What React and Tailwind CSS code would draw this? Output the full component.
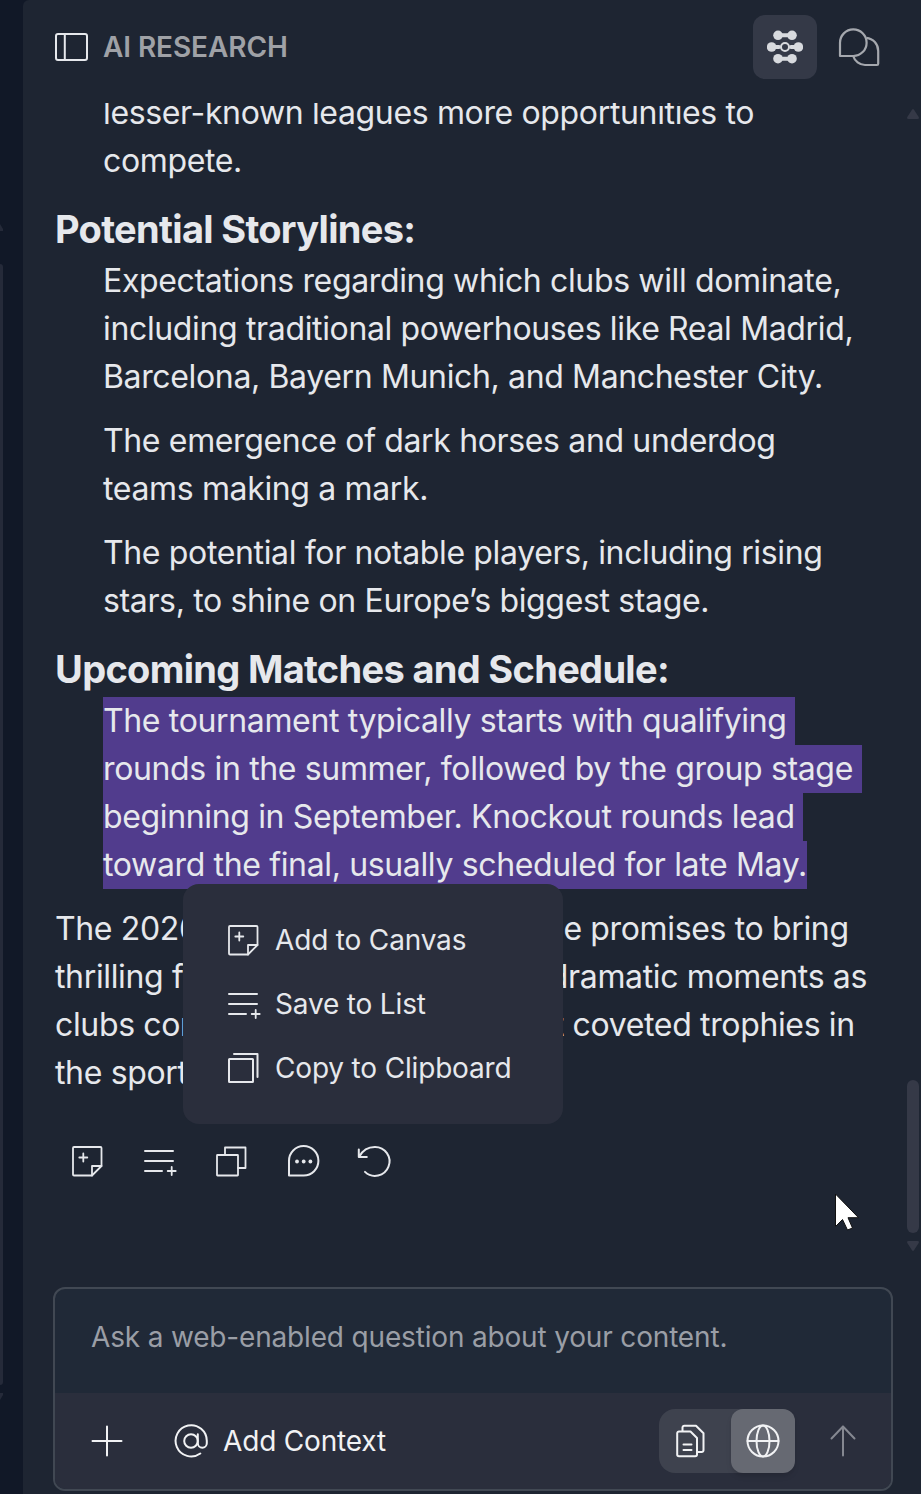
const intro = ['lesser-known leagues more opportunities to', 'compete.'];

const storylines = [
    [
        'Expectations regarding which clubs will dominate,',
        'including traditional powerhouses like Real Madrid,',
        'Barcelona, Bayern Munich, and Manchester City.'
    ],
    ['The emergence of dark horses and underdog', 'teams making a mark.'],
    ['The potential for notable players, including rising', 'stars, to shine on Europe’s biggest stage.']
];

const selected = [
    'The tournament typically starts with qualifying ',
    'rounds in the summer, followed by the group stage ',
    'beginning in September. Knockout rounds lead ',
    'toward the final, usually scheduled for late May.'
];

function Icon({ children, className = 'size-9', width = 2 }) {
    return (
        <svg
            viewBox="0 0 36 36"
            className={`shrink-0 ${className}`}
            fill="none"
            stroke="currentColor"
            strokeWidth={width}
            strokeLinecap="round"
            strokeLinejoin="round"
        >
            {children}
        </svg>
    );
}

function PanelIcon() {
    return (
        <Icon>
            <rect x="3" y="5" width="31" height="26" rx="2" />
            <path d="M11.800 5v26" />
        </Icon>
    );
}

function NodesIcon() {
    return (
        <Icon width={4}>
            <g fill="currentColor" stroke="none">
                <circle cx="11" cy="6.300" r="4.800" />
                <circle cx="25" cy="6.300" r="4.800" />
                <circle cx="4.600" cy="18" r="4.800" />
                <circle cx="31.400" cy="18" r="4.800" />
                <circle cx="11" cy="29.700" r="4.800" />
                <circle cx="25" cy="29.700" r="4.800" />
            </g>
            <path d="M11 6.300h14M4 18h8M24 18h8M11 29.700h14" />
            <circle cx="18" cy="18" r="4" strokeWidth="2" />
        </Icon>
    );
}

function ChatsIcon() {
    return (
        <svg viewBox="0 0 44 44" className="size-11" fill="none" stroke="currentColor" strokeWidth="2.2" strokeLinejoin="round">
            <path d="M3 31V17.800a13.300 13.300 0 1 1 13.300 13.200Z" />
            <path d="M29.400 12.900a13 13 0 0 1 11.800 13V38.800a1.200 1.200 0 0 1-1.200 1.200H28a12.600 12.600 0 0 1-11.800-9" />
        </svg>
    );
}

function NoteIcon() {
    return (
        <Icon width={1.8}>
            <path d="M23 32.500H5a1 1 0 0 1-1-1V5a1 1 0 0 1 1-1h26.500a1 1 0 0 1 1 1v18Z" />
            <path d="M23 32.500V23h9.500" />
            <path d="M14.300 10.500v8M10.300 14.500h8" />
        </Icon>
    );
}

function ListIcon() {
    return (
        <Icon>
            <path d="M4 8h28M4 18h28M4 28h17" />
            <path d="M26.700 28h8M30.700 24v8" strokeWidth="1.800" />
        </Icon>
    );
}

function CopyIcon() {
    return (
        <Icon>
            <rect x="4" y="9" width="24" height="23" rx="0.500" />
            <path d="M9 4h23.500v23" />
        </Icon>
    );
}

function DuplicateIcon() {
    return (
        <Icon width={1.800}>
            <rect x="4" y="12" width="21" height="20.500" rx="0.500" />
            <path d="M12 12V4.500h20.500V25H25" />
        </Icon>
    );
}

function CommentIcon() {
    return (
        <Icon>
            <path d="M4 32.500V18a14.700 14.700 0 1 1 14.700 14.500Z" />
            <g fill="currentColor" stroke="none">
                <circle cx="12" cy="18.500" r="1.900" />
                <circle cx="18.700" cy="18.500" r="1.900" />
                <circle cx="25.400" cy="18.500" r="1.900" />
            </g>
        </Icon>
    );
}

function UndoIcon() {
    return (
        <Icon>
            <path d="M1.800 6.500V14h8M2.300 13.500C5.500 7.500 11 3.900 17.800 3.900A14.500 14.500 0 1 1 8 28.900" />
        </Icon>
    );
}

function PlusIcon() {
    return (
        <Icon>
            <path d="M18 3.500v29M3.500 18h29" />
        </Icon>
    );
}

function AtIcon() {
    return (
        <Icon>
            <circle cx="18" cy="18" r="6.800" />
            <path d="M24.800 11.200v9a4.500 4.500 0 0 0 9 0V18a15.600 15.600 0 1 0-6.500 12.500" />
        </Icon>
    );
}

function FilesIcon() {
    return (
        <Icon>
            <path d="M6 8.500h11.500l6.500 6.500v16.500a1.800 1.800 0 0 1-1.800 1.800H6a1.800 1.800 0 0 1-1.800-1.800V10.300A1.800 1.800 0 0 1 6 8.500Z" />
            <path d="M9.500 8V4.500a1.800 1.800 0 0 1 1.800-1.800H23l7.500 7.500v17a1.800 1.800 0 0 1-1.800 1.800H25M10.500 21.500h8M10.500 27h8" />
        </Icon>
    );
}

function GlobeIcon() {
    return (
        <Icon>
            <circle cx="18" cy="18" r="15.500" />
            <ellipse cx="18" cy="18" rx="6.500" ry="15.500" />
            <path d="M2.500 18h31" />
        </Icon>
    );
}

function ArrowUpIcon() {
    return (
        <Icon>
            <path d="M18 32.500V3.500M6.500 15.500 18 3.500l11.500 12" />
        </Icon>
    );
}

function Lines({ lines, className = '' }) {
    return (
        <p className={`text-[32px] leading-[48px] tracking-[-0.011em] ${className}`}>
            {lines.map((line) => (
                <span key={line} className="block whitespace-nowrap">{line}</span>
            ))}
        </p>
    );
}

function Heading({ children }) {
    return <h3 className="mt-4 text-[38px] leading-[56px] font-bold tracking-[-0.018em] whitespace-nowrap">{children}</h3>;
}

function Closing() {
    return (
        <div className="mt-4 text-[32px] leading-[48px] tracking-[-0.011em] whitespace-nowrap">
            <p>The 2026 UEFA Champions League promises to bring</p>
            <p className="flex w-[812px] justify-between"><span>thrilling football, surprises,</span><span>and dramatic moments as</span></p>
            <p>clubs compete for one of the most coveted trophies in</p>
            <p>the sport.</p>
        </div>
    );
}

function SelectionMenu() {
    return (
        <div className="absolute left-[160px] top-[781px] w-[380px] h-[240px] rounded-2xl bg-[#2a2e3c] pl-[42px] py-6 text-[28px] tracking-[-0.006em] text-[#e6e8ec]">
            <div className="flex h-16 items-center gap-[14px]"><NoteIcon />Add to Canvas</div>
            <div className="flex h-16 items-center gap-[14px]"><ListIcon />Save to List</div>
            <div className="flex h-16 items-center gap-[14px]"><CopyIcon />Copy to Clipboard</div>
        </div>
    );
}

function Scrollbar() {
    return (
        <div className="absolute right-[2px] top-[6px] flex h-[1142px] w-3 flex-col items-center text-[#353947]">
            <svg viewBox="0 0 12 10" className="h-[10px] w-3" fill="currentColor"><path d="M5 .7Q6-.5 7 .7L11.700 8Q12.500 10 10.500 10H1.500Q-.5 10 .3 8Z" /></svg>
            <div className="mt-[961px] h-[153px] w-3 rounded-full bg-[#353947]" />
            <svg viewBox="0 0 12 10" className="mt-2 h-[10px] w-3" fill="currentColor"><path d="M5 9.300Q6 10.500 7 9.300L11.700 2Q12.500 0 10.500 0H1.500Q-.5 0 .3 2Z" /></svg>
        </div>
    );
}

function Composer() {
    return (
        <div className="ml-[30px] h-[204px] w-[840px] overflow-hidden rounded-xl border-2 border-[#414853] bg-[#202937] text-[28px] tracking-[-0.006em]">
            <div className="flex h-[104px] items-start pl-9 pt-[27px] leading-[42px] text-[#9a9ea6]">
                Ask a web-enabled question about your content.
            </div>
            <div className="flex h-24 items-center bg-[#2a2e3c] pl-[34px] text-[#f1f2f4]">
                <PlusIcon />
                <div className="ml-12 flex items-center gap-[14px]"><AtIcon />Add Context</div>
                <div className="ml-auto flex h-16 w-[136px] justify-between rounded-2xl bg-[#3e424e]">
                    <div className="flex w-16 items-center justify-center"><FilesIcon /></div>
                    <div className="flex w-16 items-center justify-center rounded-xl bg-[#666972] shadow-md"><GlobeIcon /></div>
                </div>
                <div className="mr-[30px] ml-[30px] text-[#858891]"><ArrowUpIcon /></div>
            </div>
        </div>
    );
}

export default function App() {
    return (
        <div className="flex h-[1494px] w-[921px] overflow-hidden bg-[#111827] font-['Inter',sans-serif] text-[#e6e8ec]">
            <div className="flex w-[23px] shrink-0 flex-col items-start text-[#252a39]">
                <svg viewBox="0 0 3 10" className="mt-[222px] h-[10px] w-[3px]" fill="currentColor"><path d="M0 2l3 5v2H0Z" /></svg>
                <div className="mt-8 h-[1121px] w-[3px] rounded-r bg-[#252a39]" />
                <svg viewBox="0 0 3 8" className="mt-2 h-2 w-[3px]" fill="currentColor"><path d="M0 0h3v2L0 7Z" /></svg>
            </div>
            <main className="flex min-w-0 flex-1 flex-col rounded-tl-md bg-[#1e2532]">
                <header className="flex h-[103px] shrink-0 items-start pl-[30px] pt-[15px]">
                    <div className="flex h-16 items-center gap-[14px]">
                        <PanelIcon />
                        <h2 className="text-[28px] font-semibold tracking-[-0.003em] text-[#9fa1a6]">AI RESEARCH</h2>
                    </div>
                    <div className="mr-10 ml-auto flex h-16 items-center gap-5">
                        <div className="flex size-16 items-center justify-center rounded-xl bg-[#343947] text-[#d8dade]"><NodesIcon /></div>
                        <div className="text-[#a5a8ae]"><ChatsIcon /></div>
                    </div>
                </header>
                <div className="relative h-[1184px] shrink-0 overflow-hidden">
                    <div className="-mt-[14px] pl-8">
                        <Lines lines={intro} className="pl-12" />
                        <Heading>Potential Storylines:</Heading>
                        <div className="flex flex-col gap-4 pl-12">
                            {storylines.map((lines) => <Lines key={lines[0]} lines={lines} />)}
                        </div>
                        <Heading>Upcoming Matches and Schedule:</Heading>
                        <div className="pl-12 text-[32px] leading-[48px] tracking-[-0.011em]">
                            {selected.map((line) => (
                                <div key={line} className="w-fit whitespace-pre bg-[#513c8d]">{line}</div>
                            ))}
                        </div>
                        <Closing />
                        <div className="mt-[46px] flex gap-9 pl-[14px]">
                            <NoteIcon />
                            <ListIcon />
                            <DuplicateIcon />
                            <CommentIcon />
                            <UndoIcon />
                        </div>
                    </div>
                    <SelectionMenu />
                    <Scrollbar />
                    <svg viewBox="0 0 26 40" className="absolute left-[811px] top-[1089px] h-10 w-[26px]">
                        <path d="M1.500 2v32.500l7-7 5 10.500 5-2-4.500-10.300h10.500Z" fill="white" stroke="#111" strokeWidth="1" />
                    </svg>
                </div>
                <Composer />
            </main>
        </div>
    );
}
